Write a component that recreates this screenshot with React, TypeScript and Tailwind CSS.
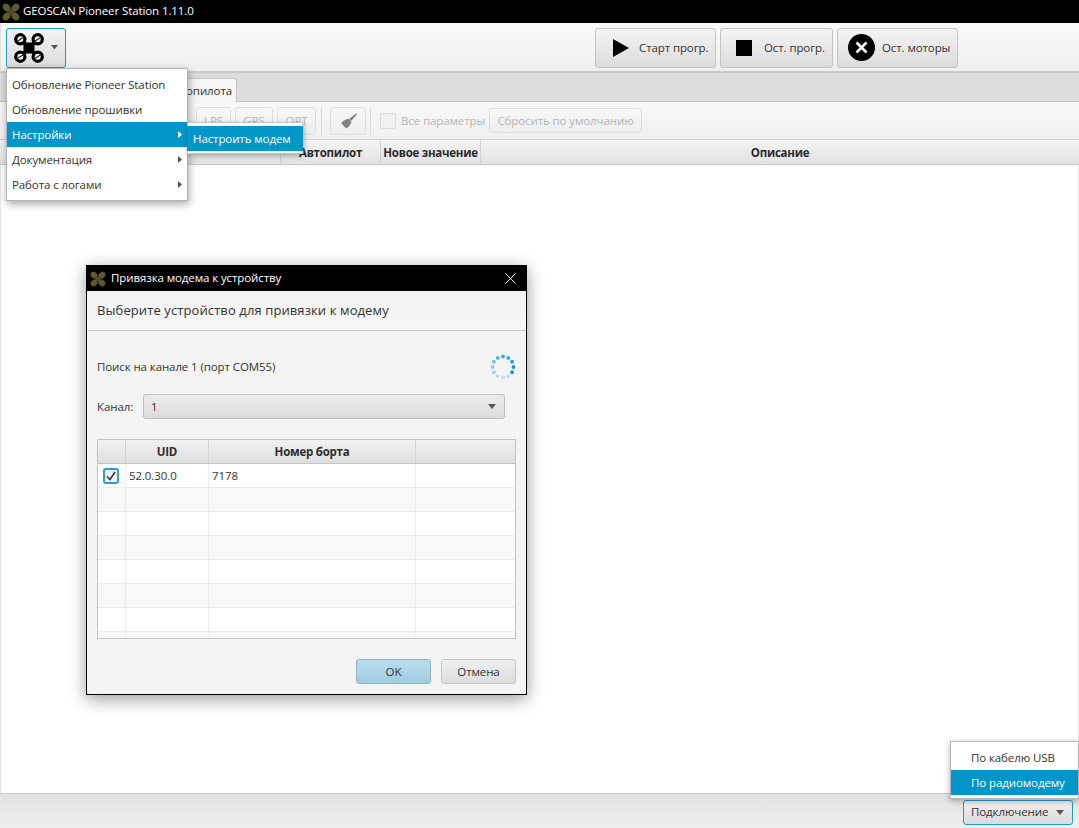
import React from "react";

const Fan = ({ size = 18 }: { size?: number }) => (
  <svg width={size} height={size} viewBox="0 0 18 18">
    <g fill="#5f5a2e">
      <ellipse cx="4.6" cy="4.6" rx="4.3" ry="3.4" transform="rotate(45 4.6 4.6)" />
      <ellipse cx="13.4" cy="4.6" rx="4.3" ry="3.4" transform="rotate(-45 13.4 4.6)" />
      <ellipse cx="4.6" cy="13.4" rx="4.3" ry="3.4" transform="rotate(-45 4.6 13.4)" />
      <ellipse cx="13.4" cy="13.4" rx="4.3" ry="3.4" transform="rotate(45 13.4 13.4)" />
    </g>
    <circle cx="9" cy="9" r="2.6" fill="#4a4a40" />
  </svg>
);

const Drone = () => (
  <svg width="30" height="30" viewBox="0 0 30 30">
    <path d="M7 7 L23 23 M23 7 L7 23" stroke="#000" strokeWidth="3.5" />
    <rect x="9.5" y="9.5" width="11" height="11" fill="#000" />
    {[[6.3, 6.3], [23.7, 6.3], [6.3, 23.7], [23.7, 23.7]].map(([x, y]) => (
      <g key={`${x}-${y}`}>
        <circle cx={x} cy={y} r="4.6" fill="#f2f2f2" stroke="#000" strokeWidth="3.2" />
        <path d={`M${x - 2.6} ${y + 1.6} L${x + 2.6} ${y - 1.6}`} stroke="#222" strokeWidth="1.2" />
      </g>
    ))}
  </svg>
);

const Caret = ({ color = "#555", w = 8 }: { color?: string; w?: number }) => (
  <svg width={w} height={(w * 5) / 8} viewBox="0 0 8 5"><path d="M0 0H8L4 5Z" fill={color} /></svg>
);

const Right = ({ color = "#555" }: { color?: string }) => (
  <svg width="4" height="7" viewBox="0 0 4 7"><path d="M0 0L4 3.5L0 7Z" fill={color} /></svg>
);

const Brush = () => (
  <svg width="17" height="16" viewBox="0 0 17 16">
    <path d="M16 0.5 L17 1.5 L11 8 L9 6 Z" fill="#777" />
    <path d="M8 5.5 L11.5 9 L9.5 13 L6 15.5 L1 10 L4 7.5 Z" fill="#777" />
  </svg>
);

const bigBtn =
  "h-10 rounded-[3px] border border-[#c4c4c4] bg-gradient-to-b from-[#f4f4f4] to-[#dcdcdc] flex items-center text-[#333] whitespace-nowrap";
const smallDis =
  "h-[28px] rounded-[3px] border border-[#dedede] bg-gradient-to-b from-[#f8f8f8] to-[#eeeeee] flex items-center justify-center text-[#b4b4b4] whitespace-nowrap";

const rows = [0, 1, 2, 3, 4, 5, 6];

const Spinner = () => {
  const ops = [0.8, 0.85, 0.9, 1, 1, 0.25, 0.2, 0.25, 0.35, 0.45, 0.55, 0.7];
  return (
    <svg width="26" height="26" viewBox="0 0 26 26">
      {ops.map((o, i) => {
        const a = (i * 30 - 90) * (Math.PI / 180);
        return <circle key={i} cx={13 + 10.5 * Math.cos(a)} cy={13 + 10.5 * Math.sin(a)} r="1.9" fill="#0a9ad0" opacity={o} />;
      })}
    </svg>
  );
};

export default function App() {
  return (
    <div
      className="relative w-[1079px] h-[828px] overflow-hidden bg-white flex flex-col text-[11.5px] tracking-[-0.1px] text-[#333]"
      style={{ fontFamily: '"Open Sans", "Noto Sans", sans-serif' }}
    >
      {/* Title bar */}
      <div className="h-[23px] bg-black flex items-center pl-[2px] gap-[3px] text-white shrink-0">
        <Fan />
        <span className="-mt-[1px]">GEOSCAN Pioneer Station 1.11.0</span>
      </div>

      {/* Main toolbar */}
      <div className="h-[50px] shrink-0 bg-gradient-to-b from-[#f9f9f9] to-[#efefef] border-b-2 border-[#c9c9c9] border-l border-l-[#e0e0e0] flex items-center pl-[5px] pt-[1px]">
        <div className="w-[60px] h-[40px] rounded-[3px] border border-[#1c9dd0] bg-gradient-to-b from-[#f4f4f4] to-[#dcdcdc] flex items-center pl-[7px] gap-[7px]">
          <Drone />
          <Caret w={7} />
        </div>
        <div className="ml-[529px] flex gap-[4px]">
          <div className={`${bigBtn} w-[121px] pl-[17px] gap-[10px]`}>
            <svg width="16" height="18" viewBox="0 0 16 18"><path d="M0 0L16 9L0 18Z" fill="#000" /></svg>
            <span>Старт прогр.</span>
          </div>
          <div className={`${bigBtn} w-[113px] pl-[15px] gap-[12px]`}>
            <span className="w-4 h-4 bg-black" />
            <span>Ост. прогр.</span>
          </div>
          <div className={`${bigBtn} w-[121px] pl-[10px] gap-[7px]`}>
            <svg width="27" height="27" viewBox="0 0 27 27">
              <circle cx="13.5" cy="13.5" r="13.5" fill="#000" />
              <path d="M8.5 8.5L18.5 18.5M18.5 8.5L8.5 18.5" stroke="#fff" strokeWidth="2.6" />
            </svg>
            <span>Ост. моторы</span>
          </div>
        </div>
      </div>

      {/* Tabs */}
      <div className="h-[29px] shrink-0 bg-gradient-to-b from-[#dcdcdc] to-[#dfdfdf] border-b border-[#c6c6c6] flex items-end pl-[5px]">
        <div className="ml-[180px] w-[52px] h-[24px] -mb-px bg-[#f6f6f6] border border-b-0 border-[#c6c6c6] rounded-t-[3px] flex items-center justify-end pr-[4px] overflow-hidden whitespace-nowrap">
          <span className="pl-px">опилота</span>
        </div>
      </div>

      {/* Secondary toolbar */}
      <div className="h-[38px] shrink-0 bg-gradient-to-b from-[#f8f8f8] to-[#f1f1f1] border-b border-[#cfcfcf] flex items-center pl-[196px]">
        <div className="flex items-center gap-[4px]">
          <div className={`${smallDis} w-[35px]`}>LPS</div>
          <div className={`${smallDis} w-[38px]`}>GPS</div>
          <div className={`${smallDis} w-[39px]`}>OPT</div>
        </div>
        <div className="w-px h-[28px] bg-[#dcdcdc] ml-[5px] mr-[8px]" />
        <div className={`${smallDis} w-[36px]`}><div className="opacity-90"><Brush /></div></div>
        <div className="w-px h-[28px] bg-[#dcdcdc] ml-[4px] mr-[5px]" />
        <div className="w-[16px] h-[16px] ml-[4px] rounded-[2px] border border-[#dcdcdc] bg-[#f1f1f1]" />
        <span className="ml-[5px] text-[#b4b4b4] whitespace-nowrap">Все параметры</span>
        <div className={`${smallDis} ml-auto mr-[437px] w-[153px] !h-[25px]`}>Сбросить по умолчанию</div>
      </div>

      {/* Table header */}
      <div className="h-[25px] shrink-0 bg-gradient-to-b from-[#f4f4f4] to-[#e2e2e2] border-b border-[#c9c9c9] flex items-center font-bold tracking-[-0.25px] text-[#2b2b2b] whitespace-nowrap">
        <div className="w-[280px] h-full" />
        <div className="w-[100px] h-full border-l border-[#d2d2d2] flex items-center justify-center pt-[1px]">Автопилот</div>
        <div className="w-[101px] h-full border-x border-[#d2d2d2] flex items-center justify-center pt-[1px]">Новое значение</div>
        <div className="flex-1 h-full flex items-center justify-center pt-[1px]">Описание</div>
      </div>

      {/* Body */}
      <div className="flex-1 bg-white border-x border-[#e4e4e4]" />

      {/* Status bar */}
      <div className="h-[35px] shrink-0 bg-gradient-to-b from-[#e2e2e2] to-[#eeeeee] border-t border-[#c9c9c9] flex items-center justify-end pr-[6px]">
        <div className="w-[110px] h-[25px] mt-[2px] rounded-[3px] border border-[#1c9dd0] bg-gradient-to-b from-[#efefef] to-[#dcdcdc] flex items-center justify-between pl-[7px] pr-[8px] whitespace-nowrap">
          <span>Подключение</span>
          <Caret />
        </div>
      </div>

      {/* App menu */}
      <div className="absolute left-[6px] top-[68px] w-[182px] h-[133px] bg-white border border-[#b5b5b5] shadow-[1px_3px_8px_rgba(0,0,0,0.35)] py-[3px] whitespace-nowrap">
        <div className="h-[25px] flex items-center pl-[5px]">Обновление Pioneer Station</div>
        <div className="h-[25px] flex items-center pl-[5px]">Обновление прошивки</div>
        <div className="h-[25px] flex items-center justify-between pl-[5px] pr-[5px] bg-[#0096c9] text-white">
          <span>Настройки</span><Right color="#fff" />
        </div>
        <div className="h-[25px] flex items-center justify-between pl-[5px] pr-[5px]">
          <span>Документация</span><Right />
        </div>
        <div className="h-[25px] flex items-center justify-between pl-[5px] pr-[5px]">
          <span>Работа с логами</span><Right />
        </div>
      </div>

      {/* Submenu */}
      <div className="absolute left-[187px] top-[122px] w-[116px] h-[32px] bg-white border border-[#c4c4c4] shadow-[1px_2px_5px_rgba(0,0,0,0.3)] py-[3px] whitespace-nowrap">
        <div className="h-[25px] -mx-px flex items-center pl-[6px] bg-[#0096c9] text-white">Настроить модем</div>
      </div>

      {/* Dialog */}
      <div className="absolute left-[86px] top-[265px] w-[441px] h-[430px] bg-[#f4f4f4] border border-black shadow-[0_4px_16px_rgba(0,0,0,0.4)] flex flex-col">
        <div className="h-[25px] bg-black text-white flex items-center pl-[3px] shrink-0">
          <Fan size={16} />
          <span className="ml-[5px] -mt-[1px]">Привязка модема к устройству</span>
          <svg className="ml-auto mr-[10px]" width="11" height="11" viewBox="0 0 11 11">
            <path d="M0.5 0.5L10.5 10.5M10.5 0.5L0.5 10.5" stroke="#fff" strokeWidth="1" />
          </svg>
        </div>
        <div className="h-[40px] shrink-0 bg-gradient-to-b from-[#f2f2f2] to-[#f7f7f7] border-b border-[#c8c8c8] flex items-center pl-[10px] text-[13px] tracking-[0.1px]">
          Выберите устройство для привязки к модему
        </div>
        <div className="flex-1 flex flex-col px-[10px] min-h-0">
          <div className="flex items-center justify-between h-[26px] mt-[23px]">
            <span>Поиск на канале 1 (порт COM55)</span>
            <Spinner />
          </div>
          <div className="flex items-center mt-[14px]">
            <span className="w-[46px]">Канал:</span>
            <div className="w-[362px] h-[25px] rounded-[3px] border border-[#bcbcbc] bg-gradient-to-b from-[#ececec] to-[#dcdcdc] flex items-center justify-between pl-[7px] pr-[8px]">
              <span>1</span>
              <Caret />
            </div>
          </div>
          <div className="mt-[20px] w-[419px] h-[200px] border border-[#c2c2c2] bg-white flex flex-col overflow-hidden">
            <div className="h-[24px] shrink-0 bg-gradient-to-b from-[#f2f2f2] to-[#dfdfdf] border-b border-[#c4c4c4] grid grid-cols-[27px_83px_207px_1fr] font-bold tracking-[-0.25px] text-[#2f2f2f]">
              <div />
              <div className="border-l border-[#d4d4d4] flex items-center justify-center">UID</div>
              <div className="border-l border-[#d4d4d4] flex items-center justify-center">Номер борта</div>
              <div className="border-l border-[#d4d4d4]" />
            </div>
            {rows.map((r) => (
              <div
                key={r}
                className={`h-[24px] shrink-0 border-b border-[#ececec] grid grid-cols-[27px_83px_207px_1fr] ${r % 2 ? "bg-[#f8f8f8]" : "bg-white"}`}
              >
                <div className="flex items-center justify-center">
                  {r === 0 && (
                    <div className="w-[16px] h-[16px] -ml-[2px] rounded-[3px] border-2 border-[#2a9fd0] bg-[#f0f0f0] flex items-center justify-center">
                      <svg width="10" height="10" viewBox="0 0 10 10"><path d="M1 5.5L4 8.5L9 1" fill="none" stroke="#333" strokeWidth="1.6" /></svg>
                    </div>
                  )}
                </div>
                <div className="border-l border-[#ececec] flex items-center pl-[3px]">{r === 0 && "52.0.30.0"}</div>
                <div className="border-l border-[#ececec] flex items-center pl-[3px]">{r === 0 && "7178"}</div>
                <div className="border-l border-[#ececec]" />
              </div>
            ))}
            <div className="flex-1 grid grid-cols-[27px_83px_207px_1fr] bg-[#f8f8f8]">
              <div />
              <div className="border-l border-[#ececec]" />
              <div className="border-l border-[#ececec]" />
              <div className="border-l border-[#ececec]" />
            </div>
          </div>
          <div className="flex justify-end gap-[10px] mt-[20px]">
            <div className="w-[75px] h-[25px] rounded-[3px] border border-[#8fb5c8] bg-gradient-to-b from-[#b9deee] to-[#9fcde2] flex items-center justify-center">OK</div>
            <div className="w-[75px] h-[25px] rounded-[3px] border border-[#c4c4c4] bg-gradient-to-b from-[#f0f0f0] to-[#dcdcdc] flex items-center justify-center">Отмена</div>
          </div>
        </div>
      </div>

      {/* Connection menu */}
      <div className="absolute left-[950px] top-[741px] w-[129px] h-[58px] bg-white border border-[#b5b5b5] shadow-[0_2px_6px_rgba(0,0,0,0.3)] pt-[3px] whitespace-nowrap">
        <div className="h-[25px] flex items-center pl-[20px]">По кабелю USB</div>
        <div className="h-[25px] flex items-center pl-[20px] bg-[#0096c9] text-white">По радиомодему</div>
      </div>
    </div>
  );
}
